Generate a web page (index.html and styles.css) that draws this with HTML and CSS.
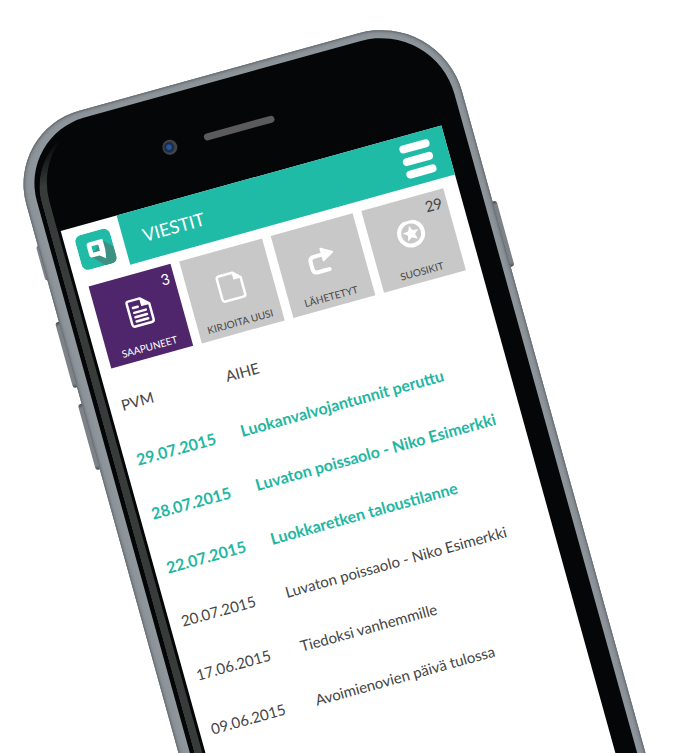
FILE: index.html
```html
<!DOCTYPE html>
<html lang="fi">
<head>
<meta charset="utf-8">
<meta name="viewport" content="width=device-width, initial-scale=1">
<title>Viestit</title>
<link rel="stylesheet" href="styles.css">
</head>
<body>
<div class="phone">
  <span class="key key-mute"></span>
  <span class="key key-up"></span>
  <span class="key key-down"></span>
  <span class="key key-power"></span>
  <div class="case">
  <div class="glass">
    <div class="earpiece">
      <span class="camera"></span>
      <span class="speaker"></span>
      <span class="balance"></span>
    </div>
    <main class="screen">
      <header class="bar">
        <div class="brand">
          <svg class="logo" viewBox="0 0 36 36" role="img" aria-label="Logo">
            <rect width="36" height="36" rx="7" fill="#20bba6"/>
            <path d="M26 10 36 20V29Q36 36 29 36H23L12 24Z" fill="#3d9183"/>
            <path fill="#fff" fill-rule="evenodd" d="M13 9.500H27V21L25.500 29.500 20 25H13Q10 25 10 22V12.500Q10 9.500 13 9.500ZM14.500 14V20.500H21.500V14Z"/>
          </svg>
        </div>
        <div class="titlebar">
          <h1>VIESTIT</h1>
          <button class="menu" type="button" aria-label="Valikko"><i></i><i></i><i></i></button>
        </div>
      </header>
      <nav class="tiles">
        <a class="tile active" href="#saapuneet">
          <span class="count">3</span>
          <svg class="icon" viewBox="0 0 32 32"><path d="M7 3H19L27 10.500V26.500Q27 29 24.500 29H7.500Q5 29 5 26.500V5Q5 3 7 3Z"/><path d="M19 3V10.500H27Z" class="fill"/><path d="M10 10.500H15M10 15.500H22M10 20H22M10 24.500H22"/></svg>
          <span class="label">SAAPUNEET</span>
        </a>
        <a class="tile" href="#uusi">
          <svg class="icon" viewBox="0 0 32 32"><path d="M7 3H21L28 9.500V26.500Q28 29 25.500 29H7Q4.500 29 4.500 26.500V5.500Q4.500 3 7 3Z"/><path d="M21 3V9.500H28Z" class="fill"/></svg>
          <span class="label">KIRJOITA UUSI</span>
        </a>
        <a class="tile" href="#lahetetyt">
          <svg class="icon" viewBox="0 0 32 32"><path class="thick" d="M22 25.500H10Q5.500 25.500 5.500 21V14Q5.500 9.500 10 9.500H20"/><path d="M18.500 3.500 29 9.500 18.500 15.500Z" class="fill head"/></svg>
          <span class="label">LÄHETETYT</span>
        </a>
        <a class="tile" href="#suosikit">
          <span class="count">29</span>
          <svg class="icon" viewBox="0 0 32 32"><circle class="thick" cx="16" cy="13" r="12"/><path class="star" d="M16 5 18.300 10.300 24 10.700 19.600 14.400 21 20 16 17 11 20 12.400 14.400 8 10.700 13.700 10.300Z"/></svg>
          <span class="label">SUOSIKIT</span>
        </a>
      </nav>
      <table class="messages">
        <thead>
          <tr><th class="date" scope="col">PVM</th><th scope="col">AIHE</th></tr>
        </thead>
        <tbody>
          <tr class="unread"><td>29.07.2015</td><td>Luokanvalvojantunnit peruttu</td></tr>
          <tr class="unread"><td>28.07.2015</td><td>Luvaton poissaolo - Niko Esimerkki</td></tr>
          <tr class="unread"><td>22.07.2015</td><td>Luokkaretken taloustilanne</td></tr>
          <tr><td>20.07.2015</td><td>Luvaton poissaolo - Niko Esimerkki</td></tr>
          <tr><td>17.06.2015</td><td>Tiedoksi vanhemmille</td></tr>
          <tr><td>09.06.2015</td><td>Avoimienovien päivä tulossa</td></tr>
        </tbody>
      </table>
    </main>
  </div>
  </div>
</div>
</body>
</html>
```
FILE: styles.css
```css
* { box-sizing: border-box; }

body {
  margin: 0;
  height: 100vh;
  overflow: hidden;
  background: #fff;
  color: #454545;
  font-family: Lato, "Liberation Sans", sans-serif;
  font-size: 15px;
}

.phone {
  position: relative;
  width: 100%;
  max-width: 450px;
  margin: 131px 0 0 6px;
  transform: rotate(-15.5deg);
  transform-origin: 0 0;
}

.case {
  position: relative;
  padding: 8px 8px 8px 11px;
  border-radius: 76px 84px 84px 76px;
  background: #8f969c;
  box-shadow: inset 0 0 2px 1px #63686d, inset 0 0 5px 2px #7d848b;
}

.glass {
  position: relative;
  padding: 0 21px 0 15px;
  border-radius: 68px 76px 76px 68px;
  background: #040608;
}
.glass::before {
  content: "";
  position: absolute;
  inset: 6px 6px 6px 4px;
  border-left: 8px solid #373c3a;
  border-radius: 66px;
  mask-image: linear-gradient(transparent 8px, #000 50px);
}

.key {
  position: absolute;
  width: 12px;
  height: 68px;
  border-radius: 3px;
  background: linear-gradient(#45484f, #7d8288 6%, #7d8288 94%, #45484f);
}
.key-mute { left: -2px; top: 119px; height: 36px; }
.key-up { left: -4px; top: 198px; }
.key-down { left: -4px; top: 283px; }
.key-power { right: -4px; top: 198px; }

.earpiece {
  display: flex;
  align-items: center;
  justify-content: center;
  gap: 28px;
  height: 103px;
  padding-left: 3px;
}
.camera, .balance { width: 15px; height: 15px; }
.camera {
  border-radius: 50%;
  background: radial-gradient(circle at 45% 48%, #2456a0 0 2px, #14233f 4px, #34383f 5px, #43464b 7px);
}
.speaker {
  width: 73px;
  height: 7px;
  border-radius: 4px;
  background: #5b5b5d;
}

.screen {
  position: relative;
  padding-bottom: 260px;
  background: #fff;
}

.bar { display: flex; height: 51px; }
.brand {
  display: flex;
  align-items: center;
  justify-content: center;
  width: 58px;
  padding-top: 3px;
}
.logo { width: 36px; height: 36px; }
.titlebar {
  display: flex;
  flex: 1;
  align-items: center;
  justify-content: space-between;
  padding: 0 16px 0 20px;
  background: #20bba6;
}
h1 {
  margin: 0;
  color: #fff;
  font-size: 18px;
  font-weight: 400;
}
.menu {
  display: grid;
  gap: 5px;
  width: 31px;
  padding: 0;
  border: 0;
  background: none;
}
.menu i {
  height: 8px;
  border-radius: 4px;
  background: #fff;
}

.tiles {
  display: grid;
  grid-template-columns: repeat(4, 1fr);
  gap: 9px;
  padding: 10px 15px 10px 12px;
}
.tile {
  position: relative;
  display: flex;
  flex-direction: column;
  align-items: center;
  gap: 14px;
  height: 85px;
  padding-top: 22px;
  background: #c8c8c8;
  color: #454545;
  text-decoration: none;
}
.active { background: #4f266b; color: #fff; }
.count {
  position: absolute;
  top: 4px;
  right: 5px;
  font-size: 15px;
  line-height: 18px;
}
.label { font-size: 10px; line-height: 12px; white-space: nowrap; }
.icon {
  width: 32px;
  height: 32px;
  fill: none;
  stroke: #fff;
  stroke-width: 2.500;
  stroke-linecap: round;
  stroke-linejoin: round;
}
.icon .fill { fill: #fff; stroke-width: 1; }
.icon .thick { stroke-width: 4; }
.icon .head { stroke-width: 2; }
.icon .star { fill: #fff; stroke: none; }

.messages {
  width: 100%;
  border-collapse: collapse;
  table-layout: fixed;
}
.messages th, .messages td {
  height: 56px;
  padding: 0 0 0 12px;
  text-align: left;
  white-space: nowrap;
}
.messages th { font-size: 15px; font-weight: 400; }
.messages .date { width: 108px; }
.messages .unread td { color: #1fb7a2; font-size: 16px; font-weight: 700; }
```
